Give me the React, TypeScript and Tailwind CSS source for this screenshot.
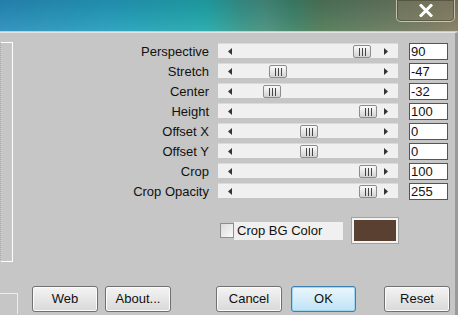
import React from "react";

const rows: { label: string; value: string; thumb: number }[] = [
  { label: "Perspective", value: "90", thumb: 135 },
  { label: "Stretch", value: "-47", thumb: 51 },
  { label: "Center", value: "-32", thumb: 45 },
  { label: "Height", value: "100", thumb: 141 },
  { label: "Offset X", value: "0", thumb: 82 },
  { label: "Offset Y", value: "0", thumb: 82 },
  { label: "Crop", value: "100", thumb: 141 },
  { label: "Crop Opacity", value: "255", thumb: 141 },
];

function Thumb({ left }: { left: number }) {
  return (
    <div
      className="absolute top-[1px] w-[18px] h-[13px] rounded-[2px] border border-[#8c8c8c] bg-gradient-to-b from-[#fbfbfb] to-[#d2d2d2] flex items-center justify-center gap-[2px]"
      style={{ left }}
    >
      <div className="w-[1px] h-[8px] bg-[#444]" />
      <div className="w-[1px] h-[8px] bg-[#444]" />
      <div className="w-[1px] h-[8px] bg-[#444]" />
    </div>
  );
}

function SliderRow({ label, value, thumb }: { label: string; value: string; thumb: number }) {
  return (
    <div className="flex items-start h-[17px]">
      <div className="w-[90px] text-right text-[13px] leading-[17px] text-[#111]">{label}</div>
      <div className="ml-[9px] w-[180px] h-[15px] bg-[#f0f0f0] border-t border-[#dadada] relative flex items-center justify-between px-[10px]">
        <svg width="4" height="7" viewBox="0 0 4 7">
          <polygon points="4,0 0,3.5 4,7" fill="#333" />
        </svg>
        <svg width="4" height="7" viewBox="0 0 4 7">
          <polygon points="0,0 4,3.5 0,7" fill="#333" />
        </svg>
        <Thumb left={thumb} />
      </div>
      <div className="ml-[11px] w-[39px] h-[17px] bg-white border border-[#555] text-[13px] leading-[15px] pl-[1px] text-[#111]">
        {value}
      </div>
    </div>
  );
}

function Btn({ children, ok }: { children: React.ReactNode; ok?: boolean }) {
  return (
    <div
      className={
        ok
          ? "w-[65px] h-[26px] rounded-[3px] border border-[#3c7fb1] bg-gradient-to-b from-[#eaf6fd] to-[#bfe3f6] shadow-[inset_0_0_0_1px_#9fd5f0] flex items-center justify-center text-[13px] text-[#111]"
          : "w-[66px] h-[26px] rounded-[3px] border border-[#707070] bg-gradient-to-b from-[#f4f4f4] to-[#d9d9d9] shadow-[inset_0_0_0_1px_#fcfcfc] flex items-center justify-center text-[13px] text-[#111]"
      }
    >
      {children}
    </div>
  );
}

export default function App() {
  return (
    <div
      className="w-[458px] h-[315px] overflow-hidden bg-[#c6c6c6] flex flex-col"
      style={{ fontFamily: '"Liberation Sans", Arial, sans-serif' }}
    >
      {/* title bar */}
      <div className="h-[31px] relative bg-[linear-gradient(90deg,#2a8fba_0%,#25a0bc_25%,#22aaaa_45%,#3a9688_53%,#47907c_58%,#3f8468_64%,#527a56_70%,#5f7a5c_78%,#6f7a5e_88%,#857d62_100%)] flex justify-end">
        <div className="absolute inset-0 bg-gradient-to-b from-[rgba(0,0,40,0.12)] to-[rgba(255,255,255,0.06)]" />
        <div className="relative mr-[3px] w-[59px] h-[22px] rounded-b-[5px] border border-t-0 border-[rgba(230,230,210,0.7)] shadow-[inset_0_0_0_1px_rgba(60,60,40,0.5)] bg-[rgba(140,130,100,0.3)] flex items-center justify-center">
          <svg width="14" height="13" viewBox="0 0 14 13">
            <path d="M2 1.5 L12 11.5 M12 1.5 L2 11.5" stroke="#fff" strokeWidth="3" strokeLinecap="square" />
          </svg>
        </div>
      </div>
      <div className="h-[1px] bg-[#9fdbe0]" />
      {/* body */}
      <div className="flex-1 flex flex-col border-t border-[#e4e4e4] border-r-[3px] border-r-[#9a9a9a]">
        <div className="h-[253px] flex">
          <div className="mt-[9px] w-[13px] h-[220px] border-t border-r border-b border-white border-l border-l-[#a8a8a8] border-dotted" style={{ borderTopStyle: "solid", borderRightStyle: "solid", borderBottomStyle: "solid" }} />
          <div className="ml-[106px] pt-[10px] flex flex-col">
            <div className="flex flex-col gap-[3px]">
              {rows.map((r) => (
                <SliderRow key={r.label} {...r} />
              ))}
            </div>
            <div className="mt-[18px] ml-[101px] flex items-center">
              <div className="w-[14px] h-[15px] border border-[#8e8e8e] bg-gradient-to-br from-[#dcdcdc] to-[#fafafa]" />
              <div className="w-[109px] h-[18px] bg-[#f0f0f0] text-[13px] leading-[18px] pl-[3px] text-[#111]">Crop BG Color</div>
              <div className="ml-[9px] w-[46px] h-[25px] bg-[#5a4030] border-2 border-[#f4f4f4] shadow-[0_0_0_1px_#a0a0a0]" />
            </div>
          </div>
        </div>
        <div className="flex items-start">
          <div className="mt-[7px] w-[18px] h-[21px] border-t border-r border-[#ececec]" />
          <div className="ml-[14px]">
            <Btn>Web</Btn>
          </div>
          <div className="ml-[7px]">
            <Btn>About...</Btn>
          </div>
          <div className="ml-[45px]">
            <Btn>Cancel</Btn>
          </div>
          <div className="ml-[9px]">
            <Btn ok>OK</Btn>
          </div>
          <div className="ml-[28px]">
            <Btn>Reset</Btn>
          </div>
        </div>
      </div>
    </div>
  );
}
